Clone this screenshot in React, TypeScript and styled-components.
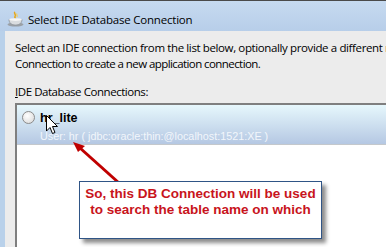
import { FunctionComponent } from 'react';
import styled, { createGlobalStyle } from 'styled-components';

const GlobalStyle = createGlobalStyle`
  html, body {
    margin: 0;
    padding: 0;
    background: #ffffff;
  }
`;

const Window = styled.div`
  position: relative;
  width: 386px;
  height: 247px;
  overflow: hidden;
  display: flex;
  flex-direction: column;
  box-sizing: border-box;
  border-top: 1px solid #4a4a4a;
  background: #b9d1ea;
  font-family: "Open Sans", "Liberation Sans", sans-serif;
`;

const TitleBar = styled.div`
  height: 30px;
  flex-shrink: 0;
  display: flex;
  align-items: center;
  gap: 4px;
  padding: 6px 0 0 7px;
  box-sizing: border-box;
  background: linear-gradient(#c6daf0, #b7cee9);
`;

const TitleText = styled.span`
  font-size: 11.5px;
  color: #000000;
  letter-spacing: -0.2px;
`;

const Body = styled.div`
  flex: 1;
  display: flex;
  padding-left: 5px;
  min-height: 0;
`;

const Content = styled.div`
  flex: 1;
  display: flex;
  flex-direction: column;
  background: #ececec;
  padding: 9px 0 0 10px;
  overflow: hidden;
`;

const Description = styled.div`
  display: flex;
  flex-direction: column;
  font-size: 11.5px;
  line-height: 16px;
  white-space: nowrap;
  color: #000000;
`;

const DescLine = styled.span<{ $spacing: number }>`
  letter-spacing: ${({ $spacing }) => $spacing}px;
`;

const Label = styled.div`
  margin-top: 12px;
  font-size: 11.5px;
  line-height: 16px;
  letter-spacing: -0.45px;
  color: #000000;
`;

const Mnemonic = styled.span`
  text-decoration: underline;
`;

const ListBox = styled.div`
  margin-top: 3px;
  flex: 1;
  width: calc(100% + 20px);
  background: #ffffff;
  border-top: 2px solid #7f7f7f;
  border-left: 2px solid #7f7f7f;
`;

const SelectedItem = styled.div`
  height: 40px;
  box-sizing: border-box;
  display: flex;
  gap: 5px;
  padding: 6px 0 0 5px;
  border-bottom: 1px solid #c4c8cc;
  background: linear-gradient(#e6f7fc, #b5c8e3);
`;

const Radio = styled.span`
  width: 13px;
  height: 13px;
  flex-shrink: 0;
  box-sizing: border-box;
  border-radius: 50%;
  border: 1px solid #8b8b8b;
  background: radial-gradient(circle at 40% 35%, #ffffff, #e2e2e2 70%, #d2d2d2);
`;

const ItemText = styled.div`
  display: flex;
  flex-direction: column;
`;

const ItemName = styled.span`
  font-family: "Liberation Sans", Arial, sans-serif;
  font-weight: bold;
  font-size: 12.5px;
  line-height: 14px;
  color: #000000;
`;

const ItemSub = styled.span`
  margin-top: 5px;
  font-family: "Liberation Sans", Arial, sans-serif;
  font-size: 10.8px;
  line-height: 13px;
  color: #f2f6fb;
  white-space: nowrap;
`;

const Cursor = styled.svg`
  position: absolute;
  left: 46px;
  top: 114px;
`;

const RedArrow = styled.svg`
  position: absolute;
  left: 0;
  top: 0;
`;

const Callout = styled.div`
  position: absolute;
  left: 79px;
  top: 180px;
  width: 243px;
  height: 58px;
  box-sizing: border-box;
  background: #ffffff;
  border: 1.5px solid #2f5486;
  box-shadow: 4px 4px 4px rgba(0, 0, 0, 0.45);
  padding-top: 4px;
  text-align: center;
  font-family: "Liberation Sans", Arial, sans-serif;
  font-weight: bold;
  font-size: 13.5px;
  line-height: 16px;
  color: #c8141c;
`;

const CoffeeIcon: FunctionComponent = () => (
  <svg width="17" height="16" viewBox="0 0 17 16">
    <path d="M8 1 C6 2.5 10 3.5 8 5.5 C7 6.5 9 7 8.5 8" stroke="#e6a81e" strokeWidth="1.6" fill="none" />
    <path d="M10 2.5 C9 3.5 11 4.5 10 6" stroke="#f3cf5a" strokeWidth="1.1" fill="none" />
    <ellipse cx="8.5" cy="13.5" rx="8" ry="2" fill="#9aa0a6" />
    <path d="M2 8.5 L15 8.5 C15 12 12.5 14 8.5 14 C4.5 14 2 12 2 8.5 Z" fill="#d9dcdf" stroke="#8c9299" strokeWidth="0.8" />
    <ellipse cx="8.5" cy="8.6" rx="6.5" ry="1.4" fill="#f4f4f4" />
  </svg>
);

export default function App() {
  return (
    <>
      <GlobalStyle />
      <Window>
        <TitleBar>
          <CoffeeIcon />
          <TitleText>Select IDE Database Connection</TitleText>
        </TitleBar>
        <Body>
          <Content>
            <Description>
              <DescLine $spacing={-0.38}>
                Select an IDE connection from the list below, optionally provide a different name for the
              </DescLine>
              <DescLine $spacing={-0.58}>
                Connection to create a new application connection.
              </DescLine>
            </Description>
            <Label>
              <Mnemonic>I</Mnemonic>DE Database Connections:
            </Label>
            <ListBox>
              <SelectedItem>
                <Radio />
                <ItemText>
                  <ItemName>hr_lite</ItemName>
                  <ItemSub>User: hr ( jdbc:oracle:thin:@localhost:1521:XE )</ItemSub>
                </ItemText>
              </SelectedItem>
            </ListBox>
          </Content>
        </Body>
        <Cursor width="13" height="20" viewBox="0 0 13 20">
          <path d="M0.5 0.5 L0.5 16 L4 12.5 L6.5 18.5 L9 17.5 L6.5 11.5 L11.5 11.5 Z" fill="#ffffff" stroke="#000000" strokeWidth="1" strokeLinejoin="miter" />
        </Cursor>
        <RedArrow width="386" height="247" viewBox="0 0 386 247">
          <line x1="119" y1="182" x2="80" y2="147" stroke="#c00000" strokeWidth="3" />
          <path d="M73 141 L85 145 L78 151 Z" fill="#c00000" />
        </RedArrow>
        <Callout>
          So, this DB Connection will be used
          <br />
          to search the table name on which
        </Callout>
      </Window>
    </>
  );
}
